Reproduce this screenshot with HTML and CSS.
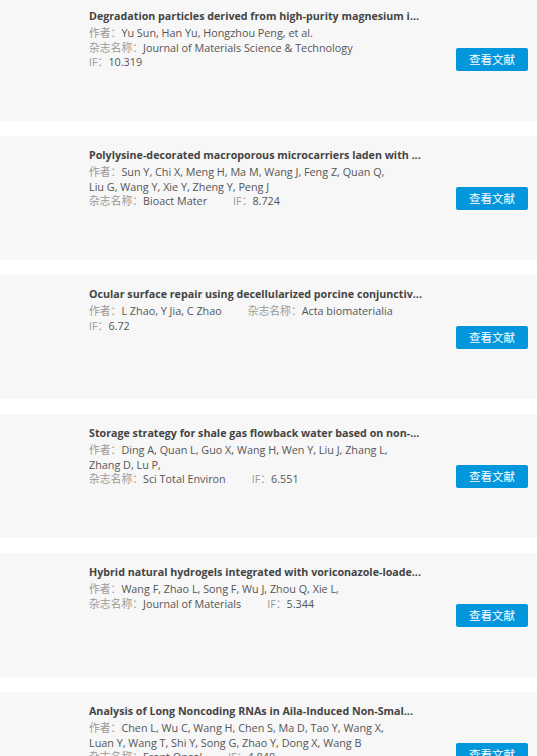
FILE: index.html
```html
<!DOCTYPE html>
<html lang="zh">
<head>
<meta charset="utf-8">
<title>文献列表</title>
<link rel="stylesheet" href="styles.css">
</head>
<body>
<div class="list">
  <div class="card">
    <div class="info">
      <div class="title">Degradation particles derived from high-purity magnesium i...</div>
      <div class="meta">
        <span class="item"><span class="label">作者：</span>Yu Sun, Han Yu, Hongzhou Peng, et al.</span>
        <span class="item"><span class="label">杂志名称：</span>Journal of Materials Science &amp; Technology</span>
        <span class="item"><span class="label">IF：</span>10.319</span>
      </div>
    </div>
    <button class="btn">查看文献</button>
  </div>
  <div class="card">
    <div class="info">
      <div class="title">Polylysine-decorated macroporous microcarriers laden with ...</div>
      <div class="meta">
        <span class="item"><span class="label">作者：</span>Sun Y, Chi X, Meng H, Ma M, Wang J, Feng Z, Quan Q, Liu G, Wang Y, Xie Y, Zheng Y, Peng J</span>
        <span class="item"><span class="label">杂志名称：</span>Bioact Mater</span>
        <span class="item"><span class="label">IF：</span>8.724</span>
      </div>
    </div>
    <button class="btn">查看文献</button>
  </div>
  <div class="card">
    <div class="info">
      <div class="title">Ocular surface repair using decellularized porcine conjunctiv...</div>
      <div class="meta">
        <span class="item"><span class="label">作者：</span>L Zhao, Y Jia, C Zhao</span>
        <span class="item"><span class="label">杂志名称：</span>Acta biomaterialia</span>
        <span class="item"><span class="label">IF：</span>6.72</span>
      </div>
    </div>
    <button class="btn">查看文献</button>
  </div>
  <div class="card">
    <div class="info">
      <div class="title">Storage strategy for shale gas flowback water based on non-...</div>
      <div class="meta">
        <span class="item"><span class="label">作者：</span>Ding A, Quan L, Guo X, Wang H, Wen Y, Liu J, Zhang L, Zhang D, Lu P,</span>
        <span class="item"><span class="label">杂志名称：</span>Sci Total Environ</span>
        <span class="item"><span class="label">IF：</span>6.551</span>
      </div>
    </div>
    <button class="btn">查看文献</button>
  </div>
  <div class="card">
    <div class="info">
      <div class="title">Hybrid natural hydrogels integrated with voriconazole-loade...</div>
      <div class="meta">
        <span class="item"><span class="label">作者：</span>Wang F, Zhao L, Song F, Wu J, Zhou Q, Xie L,</span>
        <span class="item"><span class="label">杂志名称：</span>Journal of Materials</span>
        <span class="item"><span class="label">IF：</span>5.344</span>
      </div>
    </div>
    <button class="btn">查看文献</button>
  </div>
  <div class="card">
    <div class="info">
      <div class="title">Analysis of Long Noncoding RNAs in Aila-Induced Non-Smal...</div>
      <div class="meta">
        <span class="item"><span class="label">作者：</span>Chen L, Wu C, Wang H, Chen S, Ma D, Tao Y, Wang X, Luan Y, Wang T, Shi Y, Song G, Zhao Y, Dong X, Wang B</span>
        <span class="item"><span class="label">杂志名称：</span>Front Oncol</span>
        <span class="item"><span class="label">IF：</span>4.848</span>
      </div>
    </div>
    <button class="btn">查看文献</button>
  </div>
</div>
</body>
</html>
```
FILE: styles.css
```css
* { box-sizing: border-box; }
html, body {
  margin: 0;
  padding: 0;
  background: #ffffff;
  overflow: hidden;
}
body {
  font-family: "Open Sans", "Noto Sans CJK SC", sans-serif;
  font-size: 12px;
  color: #555555;
}
.list {
  display: flex;
  flex-direction: column;
  gap: 15px;
  margin-top: -3px;
}
.card {
  height: 124px;
  flex-shrink: 0;
  background: #f7f7f7;
  display: flex;
  align-items: center;
  justify-content: space-between;
  padding: 0 9px 0 89px;
}
.info {
  align-self: flex-start;
  padding-top: 12px;
  width: 340px;
}
.title {
  font-weight: 700;
  font-size: 10.7px;
  line-height: 14px;
  color: #444444;
  white-space: nowrap;
  margin-bottom: 3px;
}
.meta {
  width: 309px;
  display: flex;
  flex-wrap: wrap;
  column-gap: 26px;
  line-height: 14.5px;
  font-size: 10.8px;
}
.label { color: #999999; }
.btn {
  width: 72px;
  height: 23px;
  border: none;
  border-radius: 2px;
  background: #0297dd;
  color: #ffffff;
  font-family: "Noto Sans CJK SC", sans-serif;
  font-size: 11.5px;
  padding: 0;
  margin: 0;
  cursor: pointer;
}
```
